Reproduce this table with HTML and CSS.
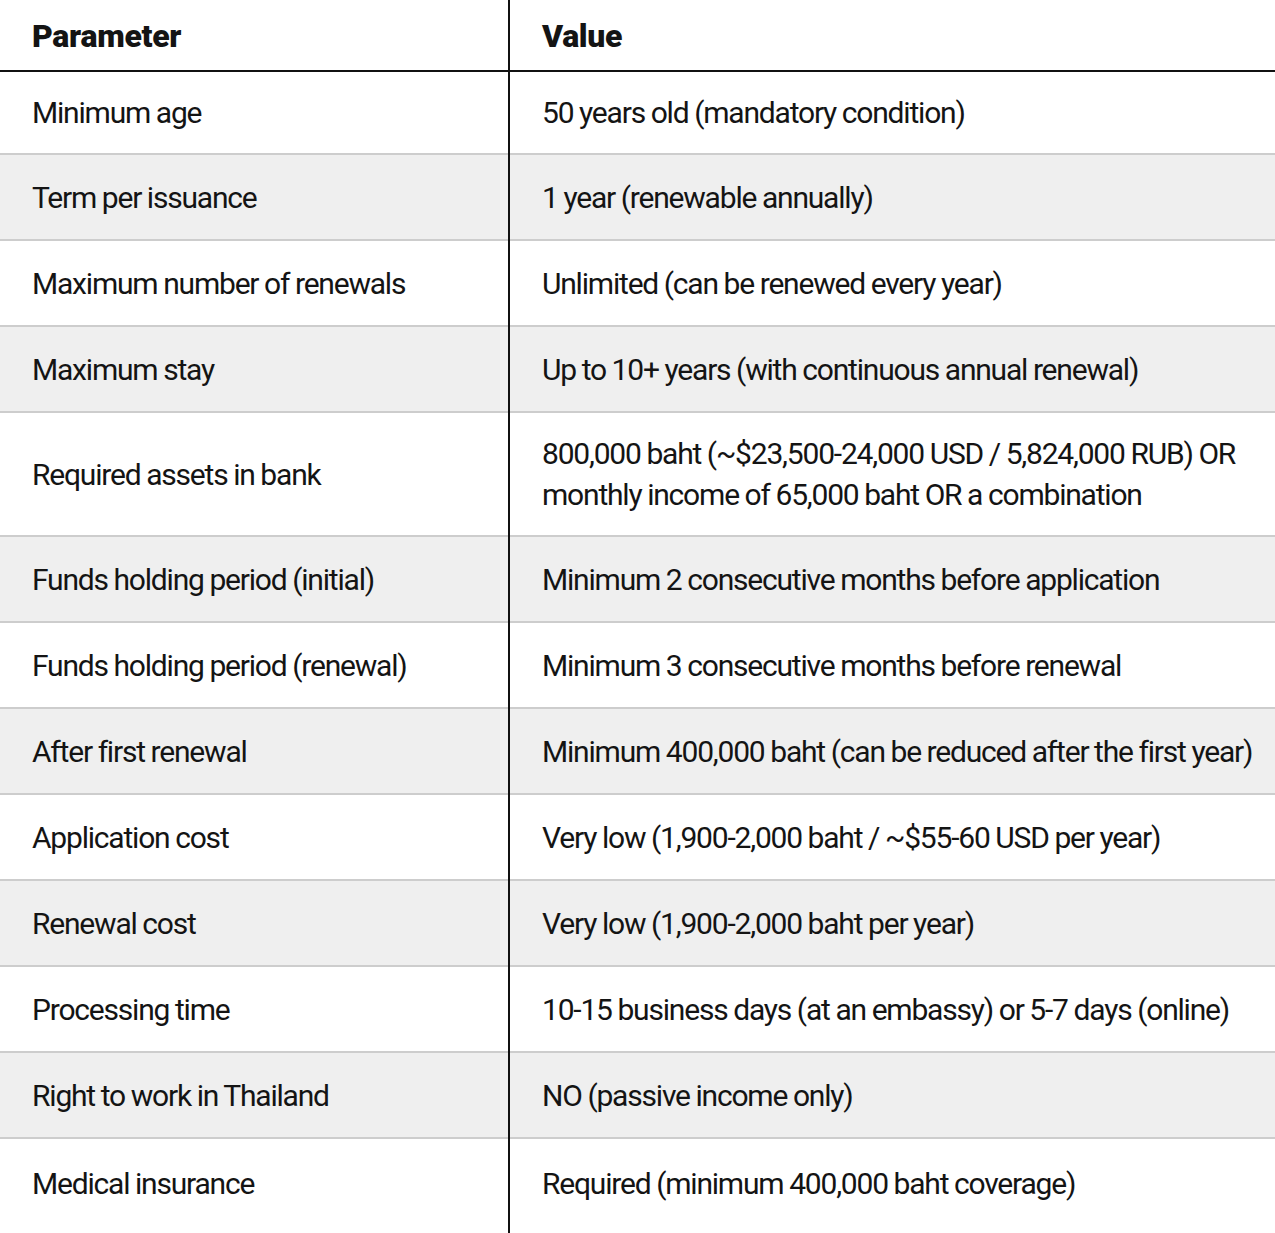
FILE: index.html
```html
<!DOCTYPE html>
<html lang="en">
<head>
<meta charset="utf-8">
<title>Parameters</title>
<link rel="stylesheet" href="styles.css">
</head>
<body>
<table class="params">
  <colgroup>
    <col class="col-param">
    <col class="col-value">
  </colgroup>
  <thead>
    <tr><th>Parameter</th><th>Value</th></tr>
  </thead>
  <tbody>
    <tr><td>Minimum age</td><td>50 years old (mandatory condition)</td></tr>
    <tr><td>Term per issuance</td><td>1 year (renewable annually)</td></tr>
    <tr><td>Maximum number of renewals</td><td>Unlimited (can be renewed every year)</td></tr>
    <tr><td>Maximum stay</td><td>Up to 10+ years (with continuous annual renewal)</td></tr>
    <tr><td>Required assets in bank</td><td>800,000 baht (~$23,500-24,000 USD / 5,824,000 RUB) OR monthly income of 65,000 baht OR a combination</td></tr>
    <tr><td>Funds holding period (initial)</td><td>Minimum 2 consecutive months before application</td></tr>
    <tr><td>Funds holding period (renewal)</td><td>Minimum 3 consecutive months before renewal</td></tr>
    <tr><td>After first renewal</td><td>Minimum 400,000 baht (can be reduced after the first year)</td></tr>
    <tr><td>Application cost</td><td>Very low (1,900-2,000 baht / ~$55-60 USD per year)</td></tr>
    <tr><td>Renewal cost</td><td>Very low (1,900-2,000 baht per year)</td></tr>
    <tr><td>Processing time</td><td>10-15 business days (at an embassy) or 5-7 days (online)</td></tr>
    <tr><td>Right to work in Thailand</td><td>NO (passive income only)</td></tr>
    <tr><td>Medical insurance</td><td>Required (minimum 400,000 baht coverage)</td></tr>
  </tbody>
</table>
</body>
</html>
```
FILE: styles.css
```css
html, body {
  margin: 0;
  padding: 0;
  background: #ffffff;
}
body {
  font-family: Roboto, "Liberation Sans", sans-serif;
  color: #141414;
}
.params {
  width: 1275px;
  border-collapse: collapse;
  table-layout: fixed;
}
.col-param { width: 509px; }
.params th,
.params td {
  box-sizing: border-box;
  text-align: left;
  vertical-align: middle;
  font-size: 30px;
  line-height: 41px;
  letter-spacing: -1.2px;
  word-spacing: -0.5px;
  padding: 20px 8px 20px 32px;
}
.params td {
  height: 86px;
}
.params th {
  font-weight: 900;
  font-size: 32px;
  letter-spacing: -0.3px;
  word-spacing: 0;
  padding-top: 16px;
  padding-bottom: 13px;
  border-bottom: 2px solid #111;
}
.params th:first-child,
.params td:first-child {
  border-right: 2px solid #111;
}
.params tbody tr {
  border-bottom: 2px solid #cdcdcd;
}
.params tbody tr:first-child td {
  height: 82px;
}
.params tbody tr:nth-child(even) {
  background: #efefef;
}
.params tbody tr:last-child {
  border-bottom: none;
}
.params tbody tr:last-child td {
  height: 100px;
  vertical-align: top;
  padding-top: 24px;
}
```
